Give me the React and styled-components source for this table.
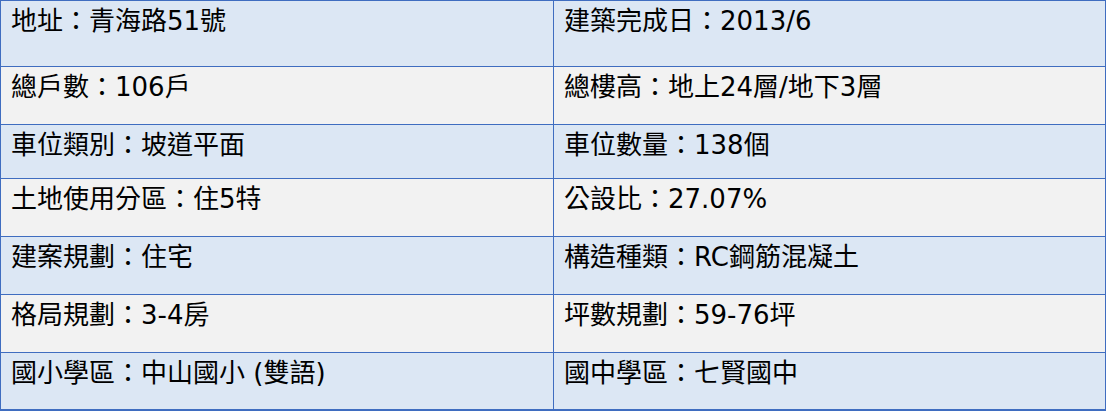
import React from "react";
import styled, { createGlobalStyle } from "styled-components";

const GlobalStyle = createGlobalStyle`
  html, body {
    margin: 0;
    padding: 0;
    background: #ffffff;
  }
`;

const Table = styled.div`
  width: 1104px;
  display: grid;
  grid-template-columns: 552px 552px;
  border: 1px solid #3f6dc0;
  border-right-width: 2px;
  border-bottom-width: 2px;
  font-family: "DejaVu Sans", "Noto Sans CJK TC", sans-serif;
  font-size: 26px;
  color: #000000;
`;

const Cell = styled.div`
  box-sizing: border-box;
  height: ${({ h }) => h}px;
  padding: 4px 0 0 10px;
  background-color: ${({ shade }) => (shade ? "#f2f2f2" : "#dce7f4")};
  border-top: ${({ first }) => (first ? "none" : "1px solid #3f6dc0")};
  border-left: ${({ right }) => (right ? "1px solid #3f6dc0" : "none")};
  line-height: 1.25;
  white-space: nowrap;
`;

const rows = [
  ["地址：青海路51號", "建築完成日：2013/6", 65],
  ["總戶數：106戶", "總樓高：地上24層/地下3層", 58],
  ["車位類別：坡道平面", "車位數量：138個", 54],
  ["土地使用分區：住5特", "公設比：27.07%", 58],
  ["建案規劃：住宅", "構造種類：RC鋼筋混凝土", 58],
  ["格局規劃：3-4房", "坪數規劃：59-76坪", 58],
  ["國小學區：中山國小 (雙語)", "國中學區：七賢國中", 57],
];

const App = () => {
  return (
    <>
      <GlobalStyle />
      <Table>
        {rows.map(([left, right, h], i) => (
          <React.Fragment key={i}>
            <Cell h={h} shade={i % 2 === 1} first={i === 0}>
              {left}
            </Cell>
            <Cell h={h} shade={i % 2 === 1} first={i === 0} right>
              {right}
            </Cell>
          </React.Fragment>
        ))}
      </Table>
    </>
  );
};

export default App;
